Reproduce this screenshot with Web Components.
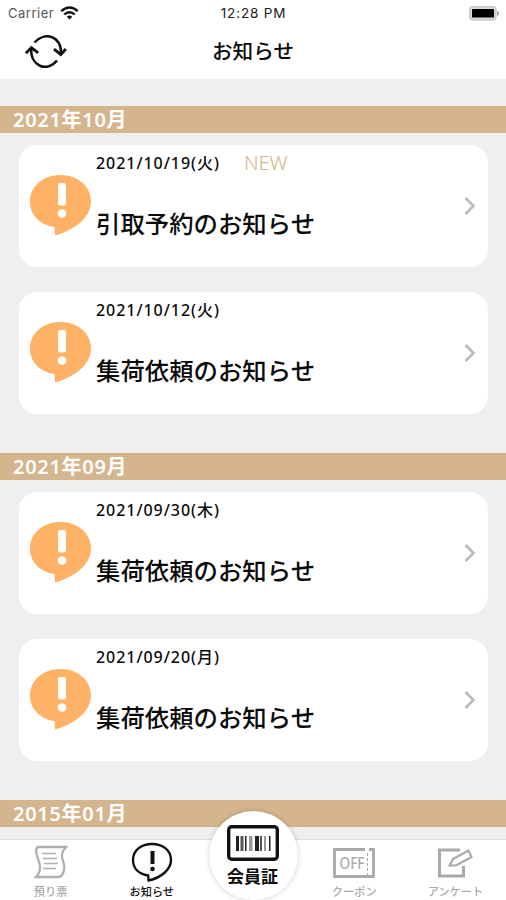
<!DOCTYPE html>
<html lang="ja"><head><meta charset="utf-8"><title>お知らせ</title>
<style>
html,body{margin:0;height:100%;overflow:hidden}
body{font-family:"Noto Sans","Noto Sans CJK JP",sans-serif;color:#0b0b0b;background:#efefef}
</style></head><body>
<notice-app></notice-app>
<script>
const define=(name,html)=>{
  const t=document.createElement('template');t.innerHTML=html;
  customElements.define(name,class extends HTMLElement{
    constructor(){super();this.attachShadow({mode:'open'}).append(t.content.cloneNode(true));}
  });
};
define('status-bar',`<style>
:host{display:grid;grid-template-columns:1fr auto 1fr;align-items:center;height:26px;padding:0 7px 0 8px;box-sizing:border-box;font:13px/26px Inter,sans-serif}
.left{display:flex;align-items:center;gap:6px;color:#555;letter-spacing:.5px}
.time{color:#222;font-size:13.5px;letter-spacing:.82px}
.battery{justify-self:end}svg{display:block}
</style>
<div class="left"><span>Carrier</span><svg width="19" height="14" viewBox="0 0 19 14" fill="none" stroke="#111" stroke-width="2.3"><path d="M1.2 5.2Q9.5-2.2 17.8 5.2M4.3 8.5Q9.5 3.9 14.7 8.5"/><path d="M6.7 10.7Q9.5 8.5 12.3 10.7L9.5 13.5Z" fill="#111" stroke="none"/></svg></div>
<span class="time">12:28 PM</span>
<svg class="battery" width="30" height="15" viewBox="0 0 30 15"><rect x=".8" y=".8" width="26" height="13" rx="3" fill="#ddd" stroke="#c8c8c8" stroke-width="1.6"/><rect x="3" y="3" width="22" height="8.6" rx=".7"/><path d="M28.2 5Q30 5.4 30 7.5T28.2 10Z" fill="#999"/></svg>`);
define('app-header',`<style>
:host{display:grid;grid-template-columns:1fr auto 1fr;align-items:center;height:53px;padding:0 0 3px 25px;box-sizing:border-box}
h1{font:500 20.6px/30px "Noto Sans CJK JP",sans-serif;margin:0;transform:translate(-12.5px,-1px)}
svg{display:block}
</style>
<svg width="42" height="35" viewBox="0 0 42 35" fill="none" stroke="#111" stroke-width="2.5"><path d="M9.5 8.5C20-3 36.5 2 36 20M32 26.5C22 39 5 32 6.3 14.5"/><path d="m29 15.2 6.8 5.4 5-5.6M.8 19.2l5.6-5.5 6.8 5.2" stroke-width="2.9"/></svg>
<h1><slot></slot></h1><span></span>`);
define('month-section',`<style>
:host{display:block}
h2{box-sizing:border-box;height:27px;margin:0;padding-left:13px;background:#d4b58d;color:#fff;font:600 20px/28px "Noto Sans","Noto Sans CJK JP",sans-serif;letter-spacing:.7px}
.cards{display:flex;flex-direction:column;gap:25px;padding:12px 18px 39px 19px}
</style><h2><slot name="month"></slot></h2><div class="cards"><slot></slot></div>`);
define('notice-card',`<style>
:host{display:grid;grid-template-columns:61px 1fr 12px;column-gap:5px;height:122px;padding:0 12px 0 11px;box-sizing:border-box;background:#fff;border-radius:18px}
.bubble{margin-top:30px;display:block}
.meta{display:flex;align-items:center;gap:24px;height:24px;padding-top:6px;font:500 16px/24px "Noto Sans","Noto Sans CJK JP",sans-serif;letter-spacing:.95px}
.title{margin-top:30px;font:500 24.4px/36px "Noto Sans CJK JP",sans-serif}
.arrow{align-self:center;display:block}
</style>
<svg class="bubble" width="61" height="61" viewBox="0 0 61 61"><path fill="#ffb165" d="M30.5 0C47.5 0 61 11 61 26.5C61 43 44 55 25 60.5L24.5 52C10 50 0 40 0 26.5C0 11 13.5 0 30.5 0Z"/><rect x="28" y="8" width="8" height="22.5" rx="2" fill="#fff"/><circle cx="32" cy="38.5" r="4.3" fill="#fff"/></svg>
<div><div class="meta"><slot name="date"></slot><slot name="tag"></slot></div><div class="title"><slot></slot></div></div>
<svg class="arrow" width="12" height="20" viewBox="0 0 12 20"><path d="m1.5 2 8 8-8 8" fill="none" stroke="#b9b9b9" stroke-width="2.5"/></svg>`);
define('new-tag',`<style>:host{font:300 20px/24px "Noto Sans",sans-serif;color:#d4b58d;letter-spacing:0}</style><slot></slot>`);
define('tab-item',`<style>
:host{display:flex;flex-direction:column;align-items:center;justify-content:space-between;height:60px;padding:3px 0 1px;box-sizing:border-box;color:#aaa;font:500 11.2px/16px "Noto Sans CJK JP",sans-serif}
:host([active]){color:#111}
</style><slot name="icon"></slot><span><slot></slot></span>`);
define('member-button',`<style>
:host{display:flex;flex-direction:column;align-items:center;width:89px;height:89px;box-sizing:border-box;padding-top:14px;border-radius:50%;background:#fff;box-shadow:0 0 5px #0003;font:700 17px/25px "Noto Sans CJK JP",sans-serif}
svg{display:block;margin-bottom:2px;transform:translateX(-1px)}
span{transform:translateX(-1px)}
</style>
<svg width="52" height="36" viewBox="0 0 52 36"><rect x="1.7" y="1.7" width="48.6" height="32.6" rx="3" fill="none" stroke="#111" stroke-width="3.4"/><path d="M9 11h3v15H9zM18 11h1.5v15H18zM28 11h4v15h-4zM42 11h1.5v15H42z" fill="#222"/><path d="M13.5 11h3v15h-3zM33 11h2v15h-2z" fill="#555"/><path d="M22 11h3.5v15H22zM37 11h2v15h-2z" fill="#999"/></svg><span><slot></slot></span>`);
define('tab-bar',`<style>
:host{position:relative;display:grid;grid-template-columns:repeat(5,1fr);height:60px;background:#fff;box-shadow:0 -1px 0 #ddd}
member-button{position:absolute;left:209px;top:-29px}
svg{display:block}
</style>
<tab-item><svg slot="icon" width="34" height="36" viewBox="0 0 34 36" fill="none" stroke="#b0b0b0" stroke-width="2.3"><path d="M5 4H32Q26 10 29 18T28 32Q27 34 24 34H2Q8 28 5 19T2 8Q2 4 5 4Z"/><path d="M8 10.5h14M9 15.5h14M10 20.5h14M9 25.5h13" stroke-width="1.3"/></svg>預り票</tab-item>
<tab-item active><svg slot="icon" width="42" height="40" viewBox="0 0 42 40" style="margin-top:-1px"><path d="M21 2C32 2 40 8.5 40 18C40 27 31 35.5 17.5 38.5L17.2 33.5C8 32 2 26.5 2 18C2 8.5 10 2 21 2Z" fill="none" stroke="#111" stroke-width="2.4" stroke-linejoin="round"/><path d="M19.5 9h4v13h-4z" fill="#111"/><circle cx="21.5" cy="27" r="2.3" fill="#111"/></svg>お知らせ</tab-item>
<span></span>
<tab-item><svg slot="icon" width="44" height="32" viewBox="0 0 44 32" style="margin-top:4px" fill="none" stroke="#aaa" stroke-width="2.8"><path d="M33 2.5H2.5V29.5H41.5V2.5H37"/><path d="M35.5 6v22" stroke-width="1" stroke-dasharray="3 2"/><text x="7.5" y="21.5" font-family="Noto Sans" font-size="15.5" font-weight="500" textLength="25" lengthAdjust="spacingAndGlyphs" fill="#aaa" stroke="none">OFF</text></svg>クーポン</tab-item>
<tab-item><svg slot="icon" width="36" height="32" viewBox="0 0 36 32" style="margin-top:4px" fill="none" stroke="#aaa" stroke-width="3"><path d="M23 3H2.5V29H26.5V19"/><path d="m12.5 18.5 3.5-6.5L31.5 3.5 34.5 10 19 18.5Z" stroke-width="2.2"/></svg>アンケート</tab-item>
<member-button>会員証</member-button>`);
define('notice-app',`<style>
:host{display:flex;flex-direction:column;width:506px;height:900px;overflow:hidden;background:#efefef}
status-bar,app-header{background:#fff;flex:none}
main{flex:1;min-height:0;overflow:hidden;padding-top:27px}
tab-bar{flex:none}
</style>
<status-bar></status-bar><app-header>お知らせ</app-header>
<main>
<month-section><span slot="month">2021年10月</span>
<notice-card><span slot="date">2021/10/19(火)</span><new-tag slot="tag">NEW</new-tag>引取予約のお知らせ</notice-card>
<notice-card><span slot="date">2021/10/12(火)</span>集荷依頼のお知らせ</notice-card></month-section>
<month-section><span slot="month">2021年09月</span>
<notice-card><span slot="date">2021/09/30(木)</span>集荷依頼のお知らせ</notice-card>
<notice-card><span slot="date">2021/09/20(月)</span>集荷依頼のお知らせ</notice-card></month-section>
<month-section><span slot="month">2015年01月</span></month-section>
</main><tab-bar></tab-bar>`);
</script></body></html>
